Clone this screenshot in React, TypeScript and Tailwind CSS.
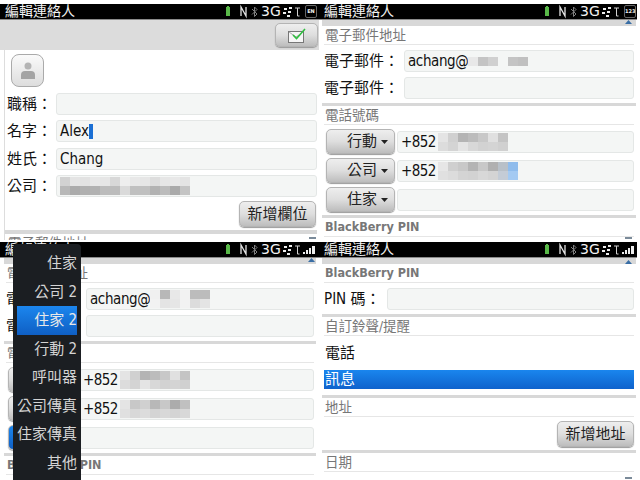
const cjk = "font-['DejaVu_Sans_Condensed','Noto_Sans_CJK_TC',sans-serif]";

const blurs: Record<string, string[][]> = {
  company: [
    ["#d2d2d2", "#e4e4e4", "#e2e2e2", "#e8e8e8", "#e6e6e6", "#d8d8d8", "#eeeeee", "#e8e8e8", "#e6e6e6", "#dddddd", "#e6e6e6", "#e8e8e8", "#e4e4e4"],
    ["#b8b8b8", "#ababab", "#b0b0b0", "#b2b2b2", "#bcbcbc", "#bcbcbc", "#dadada", "#c0c0c0", "#c0c0c0", "#b2b2b2", "#bcbcbc", "#aaaaaa", "#c4c4c4"],
  ],
  mail: [["#e8e8e8", "#c4c4c4", "#d0d0d0", "#f4f6f5", "#c4c4c4", "#c0c0c0"]],
  mailOpen: [
    ["#f0f0f0", "#b8b8b8", "#e8e8e8", "#f2f2f2", "#bcbcbc", "#bcbcbc"],
    ["#f2f2f2", "#e4e4e4", "#e6e6e6", "#f2f2f2", "#dcdcdc", "#e4e4e4"],
  ],
  phoneA: [
    ["#e4e4e4", "#d0d0d0", "#b4b4b4", "#bcbcbc", "#c8c8c8", "#e0e0e0", "#c4c4c4"],
    ["#dcdcdc", "#d4d4d4", "#e4e4e4", "#d8d8d8", "#d2d2d2", "#d4d4d4", "#d0d0d0"],
  ],
  phoneB: [
    ["#e6e6e6", "#cfcfcf", "#c8c8c8", "#b4b4b4", "#c8c8c8", "#b0b0b0", "#b8c0c8", "#8fbcec"],
    ["#e0e0e0", "#dcdcdc", "#d4d4d4", "#d2d2d2", "#d8d8d8", "#d4d4d4", "#c4ccd6", "#a4caf2"],
  ],
  phoneC: [
    ["#e4e4e4", "#c8c8c8", "#d0d0d0", "#b8b8b8", "#c8c8c8", "#acacac", "#c0c0c0"],
    ["#e0e0e0", "#d8d8d8", "#dcdcdc", "#d4d4d4", "#d8d8d8", "#d4d4d4", "#d8d8d8"],
  ],
};

function Blur({ name }: { name: string }) {
  return (
    <div className="flex flex-col">
      {blurs[name].map((row, r) => (
        <div key={r} className="flex h-[9px]">
          {row.map((c, i) => (
            <div key={i} className="w-[10px]" style={{ backgroundColor: c }} />
          ))}
        </div>
      ))}
    </div>
  );
}

function StatusBar({ badge }: { badge?: string }) {
  return (
    <div className="h-[16px] shrink-0 bg-black border-b border-[#8a8a8a] flex items-center text-[#f2f2f2]">
      <span className={`${cjk} text-[14px] leading-[15px] ml-[5px] w-[221px] shrink-0`}>編輯連絡人</span>
      <svg width="35" height="15" viewBox="0 0 35 15" className="shrink-0">
        <rect x="0" y="3" width="4" height="9" fill="#58b848" />
        <rect x="1" y="2" width="2" height="1" fill="#58b848" />
        <path d="M15 12V3l5 9V3" stroke="#e4e4e4" strokeWidth="1.3" fill="none" />
        <path d="M26 5l5 5-2.5 2.5V3L31 5.5l-5 5" stroke="#808080" strokeWidth="1" fill="none" />
      </svg>
      <span className="w-[22px] shrink-0 text-[14px] leading-[15px] font-['DejaVu_Sans',sans-serif]">3G</span>
      <svg width="35" height="15" viewBox="0 0 35 15" className="shrink-0">
        <rect x="1" y="4" width="3" height="2" fill="#eeeeee" />
        <rect x="6" y="3" width="3" height="2" fill="#eeeeee" />
        <rect x="0" y="8" width="3" height="2" fill="#eeeeee" />
        <rect x="5" y="7" width="3" height="2" fill="#eeeeee" />
        <rect x="4" y="11" width="3" height="2" fill="#eeeeee" />
        <path d="M12 4h5M14.5 4v8h2" stroke="#d0d0d0" strokeWidth="1" fill="none" />
        {!badge && (
          <g fill="#eeeeee">
            <rect x="20" y="10" width="2" height="2" />
            <rect x="23" y="8" width="2" height="4" />
            <rect x="26" y="6" width="2" height="6" />
            <rect x="29" y="4" width="3" height="8" />
          </g>
        )}
      </svg>
      {badge ? (
        <span className="-ml-[13px] w-[12px] h-[13px] shrink-0 border border-[#666666] rounded-[2px] bg-black text-[5px] leading-[11px] text-center font-['DejaVu_Sans',sans-serif] font-bold">
          {badge}
        </span>
      ) : null}
    </div>
  );
}

function Field({ children }: { children?: React.ReactNode }) {
  return (
    <div className="h-[22px] flex-1 min-w-0 bg-[#f4f6f5] border border-[#e4e7e6] rounded-[3px] flex items-center pl-[3px] text-[15px] text-[#111111] whitespace-nowrap">
      {children}
    </div>
  );
}

function LabelRow({ label, w, children }: { label: string; w: string; children?: React.ReactNode }) {
  return (
    <div className="flex items-center">
      <span className={`${w} shrink-0 text-[15px] text-[#111111] leading-[22px] whitespace-nowrap`}>{label}</span>
      <Field>{children}</Field>
    </div>
  );
}

function Grey({ children }: { children: React.ReactNode }) {
  return (
    <div className="h-[19px] mx-[2px] shrink-0 border-b border-[#e6e6e6] text-[13.5px] leading-[18px] text-[#777777] pl-[1px] overflow-hidden whitespace-nowrap">
      {children}
    </div>
  );
}

function Pin() {
  return <div className="h-[19px] mx-[2px] shrink-0 border-b border-[#e6e6e6] text-[12.5px] leading-[18px] font-bold text-[#777777] pl-[1px]">BlackBerry PIN</div>;
}

function Btn({ children, cls }: { children: React.ReactNode; cls: string }) {
  return (
    <div className={`${cls} shrink-0 rounded-[5px] border border-[#b4b4b4] bg-gradient-to-b shadow-[0_1px_1px_#999999] flex items-center justify-center text-[15px] text-[#222222]`}>
      {children}
    </div>
  );
}

const grey = "from-[#eeeeee] via-[#dedede] to-[#bdbdbd]";

function PhoneBtn({ label, blur, active }: { label: string; blur?: string; active?: boolean }) {
  return (
    <div className="flex items-center gap-[2px]">
      <Btn cls={`w-[69px] h-[25px] ${active ? "from-[#1c86ee] to-[#0f5fc4] border-[#1a6fd4]" : grey}`}>
        <span className="pl-[14px]">{label}</span>
        <svg width="7" height="4" viewBox="0 0 7 4" className="ml-[4px]"><path d="M0 0h7L3.5 4z" fill="#222222" /></svg>
      </Btn>
      <Field>
        {blur ? (
          <>
            <span className="leading-[22px] tracking-[-0.6px]">+852</span>
            <span className="ml-[2px]"><Blur name={blur} /></span>
          </>
        ) : null}
      </Field>
    </div>
  );
}

function Arrows() {
  return (
    <>
      <svg width="7" height="4" viewBox="0 0 7 4" className="absolute right-[8px] top-[20px]"><path d="M0 4h7L3.5 0z" fill="#3a6ea5" /></svg>
      <svg width="7" height="2" viewBox="0 0 7 2" className="absolute right-[8px] bottom-[1px]"><rect width="7" height="2" fill="#7a8a99" /></svg>
    </>
  );
}

function EmailAndPhones({ offset, mail, phoneB, activeHome }: { offset: string; mail: string; phoneB: string; activeHome?: boolean }) {
  return (
    <div className={`flex-1 min-h-0 flex flex-col bg-white ${offset}`}>
      <div className="h-[6px] shrink-0 bg-[#d8d8d8]" />
      <Grey>電子郵件地址</Grey>
      <div className="flex flex-col gap-[5px] px-[2px] pt-[5px] pb-[4px]">
        <LabelRow label="電子郵件：" w="w-[80px]">
          <span className="leading-[22px] tracking-[-0.4px]">achang@</span>
          <Blur name={mail} />
        </LabelRow>
        <LabelRow label="電子郵件：" w="w-[80px]" />
      </div>
      <div className="h-[3px] shrink-0 bg-[#d8d8d8]" />
      <Grey>電話號碼</Grey>
      <div className="flex flex-col gap-[4px] pl-[4px] pr-[2px] pt-[4px] pb-[3px]">
        <PhoneBtn label="行動" blur="phoneA" />
        <PhoneBtn label="公司" blur={phoneB} />
        <PhoneBtn label="住家" active={activeHome} />
      </div>
      <div className="h-[3px] shrink-0 bg-[#d8d8d8]" />
      <Pin />
    </div>
  );
}

const menu = ["住家", "公司 2", "住家 2", "行動 2", "呼叫器", "公司傳真", "住家傳真", "其他"];

export default function App() {
  return (
    <div className={`${cjk} w-[640px] h-[480px] bg-white overflow-hidden grid grid-cols-[319px_321px] grid-rows-[240px_240px]`}>
      {/* top left: name */}
      <div className="pt-[4px] flex flex-col min-h-0 overflow-hidden relative">
        <StatusBar badge="EN" />
        <div className="h-[30px] shrink-0 bg-[#dcdcdc] flex justify-end items-start pt-[3px]">
          <Btn cls={`w-[43px] h-[24px] mr-[1px] ${grey}`}>
            <svg width="18" height="15" viewBox="0 0 18 15">
              <rect x="0.5" y="3.5" width="15" height="11" fill="#f6f6f6" stroke="#777777" />
              <path d="M1 4l7 5 3-2" stroke="#aaaaaa" fill="none" />
              <path d="M5 7l3.5 3.5L17 1" stroke="#2fbf3f" strokeWidth="1.6" fill="none" />
            </svg>
          </Btn>
        </div>
        <div className="flex-1 min-h-0 ml-[4px] mr-[2px] bg-white border-l border-[#dddddd] flex flex-col overflow-hidden">
          <div className="w-[33px] h-[33px] ml-[6px] mt-[4px] rounded-[8px] border border-[#aaaaaa] bg-gradient-to-b from-[#fafafa] to-[#dddddd] flex items-center justify-center shrink-0">
            <svg width="14" height="18" viewBox="0 0 14 18">
              <circle cx="7" cy="4" r="3.5" fill="#b4b4b4" />
              <path d="M0 17v-4q0-4 4-4h6q4 0 4 4v4z" fill="#a4a4a4" />
            </svg>
          </div>
          <div className="flex flex-col gap-[5.4px] pt-[6px] pl-[2px] shrink-0">
            <LabelRow label="職稱：" w="w-[49px]" />
            <LabelRow label="名字：" w="w-[49px]">
              <span className="leading-[22px]">Alex</span>
              <span className="w-[4px] h-[15px] bg-[#1a6fd4]" />
            </LabelRow>
            <LabelRow label="姓氏：" w="w-[49px]">Chang</LabelRow>
            <LabelRow label="公司：" w="w-[49px]"><Blur name="company" /></LabelRow>
          </div>
          <div className="flex justify-end pt-[4px] pr-[1px] shrink-0">
            <Btn cls={`w-[77px] h-[26px] ${grey}`}>新增欄位</Btn>
          </div>
          <div className="h-[4px] mt-[3px] shrink-0 bg-[#d8d8d8]" />
          <Grey>電子郵件地址</Grey>
        </div>
        <svg width="7" height="2" viewBox="0 0 7 2" className="absolute right-[3px] bottom-[1px]"><rect width="7" height="2" fill="#7a8a99" /></svg>
      </div>

      {/* top right: e-mail and phones */}
      <div className="pt-[4px] pr-[3px] flex flex-col min-h-0 overflow-hidden relative">
        <StatusBar badge="123" />
        <EmailAndPhones offset="ml-[3px] mr-[1px]" mail="mail" phoneB="phoneB" />
        <Arrows />
      </div>

      {/* bottom left: same screen with the phone type menu open */}
      <div className="pt-[2px] flex flex-col min-h-0 overflow-hidden relative">
        <StatusBar />
        <EmailAndPhones offset="ml-[4px] mr-[3px]" mail="mailOpen" phoneB="phoneC" activeHome />
        <svg width="7" height="4" viewBox="0 0 7 4" className="absolute right-[4px] top-[18px]"><path d="M0 4h7L3.5 0z" fill="#3a6ea5" /></svg>
        <div className="absolute left-[13px] top-[4px] w-[68px] h-[236px] bg-[#1b1e22] rounded-t-[4px] flex flex-col pt-[5px] px-[4px]">
          {menu.map((m) => (
            <div
              key={m}
              className={`h-[28.5px] shrink-0 text-right text-[15px] leading-[29px] whitespace-nowrap ${m === "住家 2" ? "bg-gradient-to-b from-[#1c86ee] to-[#0f5fc4] text-[#e8e8e8]" : "text-[#d4d4d4]"}`}
            >
              {m}
            </div>
          ))}
        </div>
      </div>

      {/* bottom right: pin, tones, address */}
      <div className="pt-[2px] pr-[3px] flex flex-col min-h-0 overflow-hidden relative">
        <StatusBar />
        <div className="flex-1 min-h-0 ml-[3px] mr-[1px] flex flex-col bg-white">
          <div className="h-[6px] shrink-0 bg-[#d8d8d8]" />
          <Pin />
          <div className="px-[2px] pt-[5px] pb-[4px]">
            <LabelRow label="PIN 碼：" w="w-[63px]" />
          </div>
          <div className="h-[3px] shrink-0 bg-[#d8d8d8]" />
          <Grey>自訂鈴聲/提醒</Grey>
          <div className="h-[30px] leading-[34px] text-[15px] text-[#111111] pl-[3px] shrink-0">電話</div>
          <div className="h-[19px] mt-[4px] mx-[2px] pl-[1px] shrink-0 bg-gradient-to-b from-[#1a86ee] to-[#0f62cc] text-white text-[15px] leading-[18px]">訊息</div>
          <div className="h-[6px] shrink-0" />
          <div className="h-[3px] shrink-0 bg-[#d8d8d8]" />
          <Grey>地址</Grey>
          <div className="flex justify-end pt-[4px] pr-[2px] pb-[3px] shrink-0">
            <Btn cls={`w-[77px] h-[26px] ${grey}`}>新增地址</Btn>
          </div>
          <div className="h-[3px] shrink-0 bg-[#d8d8d8]" />
          <Grey>日期</Grey>
        </div>
        <Arrows />
      </div>
    </div>
  );
}
